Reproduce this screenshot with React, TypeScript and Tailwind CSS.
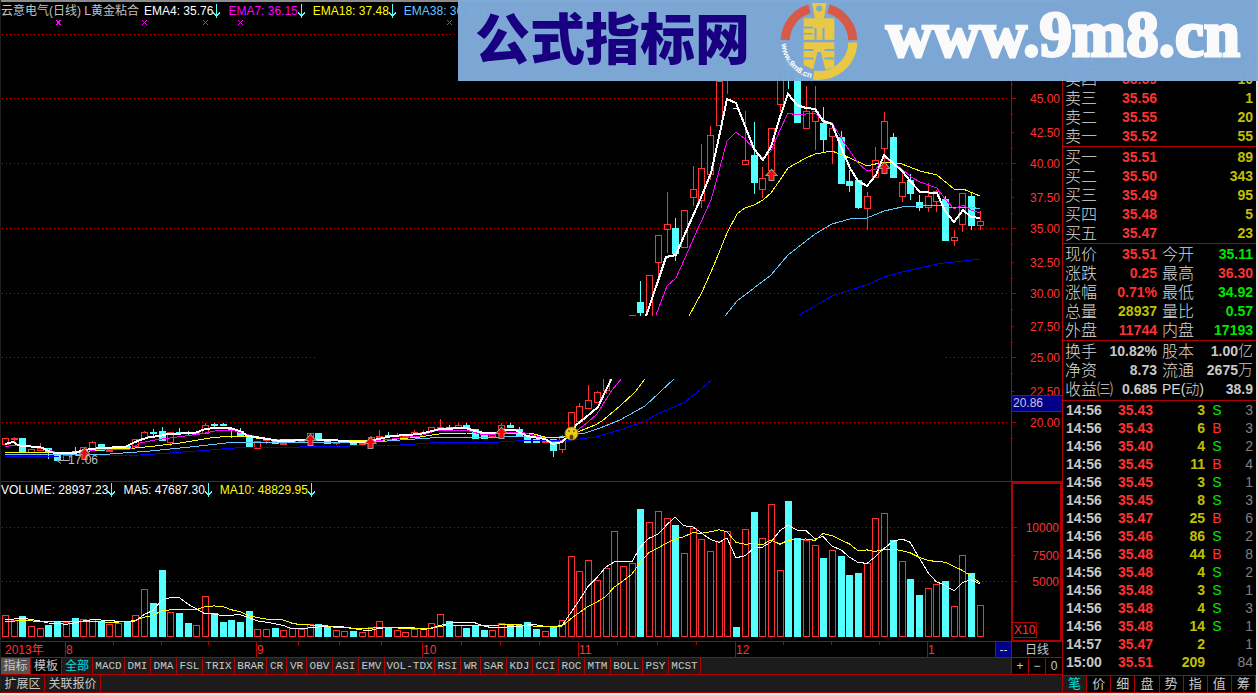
import React from "react";

type Kind = "r" | "c";
/* body top, body bottom, high, low (chart units) */
type Candle = [Kind, number, number, number, number];

const RED = "#ff3232";
const CYAN = "#54ffff";
const LINE = "#b00000";

const SANS = "font-['Liberation_Sans','Noto_Sans_CJK_SC',sans-serif]";

const barX = (i: number) => Math.round(4.9 + 8.7054 * i);

const candles: Candle[] = [
  ["r", 438, 445, 438, 445], ["r", 438, 440, 437, 442], ["c", 438, 452, 438, 452], ["r", 449, 453, 449, 453],
  ["r", 448, 451, 443, 451], ["c", 448, 453, 448, 459], ["c", 453, 461, 453, 461], ["r", 455, 461, 455, 461],
  ["c", 451, 453, 447, 453], ["r", 447, 452, 447, 452], ["r", 442, 449, 441, 449], ["c", 444, 451, 444, 451],
  ["r", 450, 451, 449, 452], ["r", 446, 450, 446, 450], ["c", 446, 449, 446, 449], ["r", 439, 447, 439, 447],
  ["r", 432, 439, 431, 439], ["c", 432, 434, 429, 437], ["c", 431, 441, 427, 441], ["r", 432, 443, 432, 446],
  ["c", 432, 434, 428, 434], ["c", 432, 433, 431, 435], ["r", 432, 434, 432, 434], ["r", 425, 434, 423, 434],
  ["c", 424, 426, 423, 428], ["c", 424, 426, 423, 426], ["c", 429, 431, 428, 438], ["c", 431, 436, 428, 436],
  ["c", 437, 447, 437, 447], ["r", 441, 449, 441, 449], ["r", 439, 441, 439, 444], ["c", 441, 444, 441, 444],
  ["r", 443, 445, 443, 445], ["r", 441, 443, 441, 443], ["r", 440, 442, 439, 442], ["r", 433, 441, 433, 441],
  ["c", 433, 439, 433, 439], ["c", 439, 444, 439, 444], ["r", 442, 444, 442, 445], ["r", 441, 442, 441, 443],
  ["c", 441, 446, 441, 446], ["r", 443, 445, 443, 445], ["r", 437, 442, 436, 442], ["r", 436, 438, 430, 438],
  ["c", 435, 437, 432, 437], ["r", 435, 437, 433, 437], ["r", 435, 437, 434, 437], ["r", 432, 435, 430, 435],
  ["r", 432, 434, 430, 434], ["r", 427, 432, 427, 432], ["r", 427, 429, 419, 429], ["c", 427, 429, 425, 431],
  ["r", 425, 428, 423, 428], ["c", 425, 429, 423, 429], ["c", 429, 439, 429, 439], ["c", 434, 439, 434, 439],
  ["r", 434, 437, 434, 437], ["r", 425, 435, 423, 435], ["c", 425, 428, 423, 428], ["c", 429, 436, 427, 436],
  ["c", 436, 443, 436, 443], ["c", 439, 443, 439, 443], ["r", 441, 443, 441, 443], ["c", 439, 451, 439, 457],
  ["r", 436, 450, 435, 453], ["r", 412, 435, 412, 435], ["r", 406, 422, 403, 424], ["r", 400, 409, 385, 409],
  ["r", 392, 403, 391, 403], ["r", 370, 391, 370, 394], ["r", 350, 370, 340, 370], ["r", 330, 350, 325, 350],
  ["r", 315, 335, 315, 335], ["c", 302, 313, 281, 316], ["r", 275, 330, 275, 330], ["r", 235, 263, 235, 276],
  ["r", 224, 230, 192, 253], ["c", 228, 254, 218, 261], ["r", 210, 248, 210, 248], ["r", 189, 198, 166, 206],
  ["r", 168, 201, 144, 208], ["r", 135, 175, 126, 180], ["r", 81, 126, 70, 126], ["r", 60, 75, 50, 94],
  ["c", 50, 60, 50, 62], ["r", 160, 165, 111, 165], ["c", 155, 183, 122, 194], ["r", 178, 190, 167, 198],
  ["r", 128, 171, 128, 171], ["r", 70, 105, 60, 112], ["c", 60, 70, 60, 89], ["c", 70, 123, 70, 123],
  ["r", 111, 129, 86, 129], ["r", 111, 122, 86, 150], ["c", 123, 140, 107, 153], ["r", 128, 137, 123, 164],
  ["c", 137, 184, 131, 184], ["c", 181, 186, 170, 192], ["c", 180, 208, 180, 209], ["r", 196, 209, 192, 230],
  ["r", 160, 178, 147, 178], ["r", 121, 149, 112, 168], ["c", 137, 178, 133, 178], ["r", 182, 197, 173, 202],
  ["c", 180, 194, 174, 200], ["c", 202, 208, 195, 211], ["r", 196, 208, 183, 212], ["r", 191, 202, 190, 212],
  ["c", 199, 241, 196, 241], ["r", 237, 241, 230, 246], ["r", 193, 225, 193, 232], ["c", 196, 226, 192, 230],
  ["r", 221, 226, 211, 230],
];

/* top edge of each volume column */
const volumes: number[] = [
  615, 620, 616, 626, 628, 625, 621, 622, 618, 619, 619, 622, 624, 623, 622, 615, 589, 603, 570, 612, 613, 623, 625,
  596, 613, 622, 620, 622, 611, 629, 629, 628, 630, 628, 629, 624, 624, 626, 630, 631, 631, 632, 627, 621, 627, 630,
  632, 629, 629, 623, 614, 621, 625, 628, 626, 630, 630, 623, 625, 625, 622, 629, 631, 626, 620, 556, 571, 560, 580,
  568, 531, 566, 563, 509, 522, 511, 518, 525, 553, 528, 539, 551, 541, 531, 627, 529, 512, 538, 504, 570, 501, 538,
  540, 545, 558, 550, 556, 575, 573, 563, 518, 513, 540, 561, 579, 595, 588, 584, 581, 606, 555, 573, 605,
];

const average = (span: number, seed: number) =>
  volumes
    .map((_, i) => {
      let sum = 0;
      for (let k = i - span + 1; k <= i; k++) sum += k < 0 ? seed : volumes[k];
      return `${barX(i)},${(sum / span).toFixed(1)}`;
    })
    .join(" ");

const series: { color: string; width: number; lines: string[] }[] = [
  {
    color: "#0000ff",
    width: 1,
    lines: [
      "5,457 60,456 100,456 140,455 170,453 210,450 235,448 262,447 300,447 330,446 350,446 400,445 445,442 500,442 530,440 571,440 595,437 620,430 645,421 660,413 685,402 712,380",
      "799,315 815,306 832,296 850,290 867,285 884,277 902,272 920,268 937,264 954,262 980,259",
    ],
  },
  {
    color: "#66c4ff",
    width: 1,
    lines: [
      "5,455 30,454 110,454 150,451 190,447 235,442 262,442 375,442 400,440 445,437 466,438 500,437 530,436 555,438 571,435 585,433 600,428 620,420 645,406 660,392 674,379",
      "725,316 737,301 754,288 771,275 788,255 806,241 815,234 832,224 850,219 867,218 884,211 902,207 937,205 954,208 971,207 980,209",
    ],
  },
  {
    color: "#ffff00",
    width: 1,
    lines: [
      "5,453 22,452 75,452 90,451 110,449 135,448 155,446 180,443 210,438 230,436 250,437 262,439 300,440 385,440 420,437 445,433 466,433 500,434 530,433 545,437 560,438 571,435 580,431 595,425 602,421 620,406 635,392 645,379",
      "689,316 702,292 714,265 727,233 737,214 745,208 754,205 763,200 771,193 780,180 788,168 806,158 815,154 832,151 850,158 867,166 884,162 902,164 920,171 937,175 954,189 963,189 980,196",
    ],
  },
  {
    color: "#ff00ff",
    width: 1,
    lines: [
      "5,447 13,445 40,447 55,452 75,453 84,452 100,449 130,449 140,443 155,440 170,438 200,434 215,431 232,430 245,434 262,438 280,440 340,440 354,443 375,441 400,438 420,436 435,431 445,430 466,430 480,434 495,434 510,432 525,433 540,437 550,441 560,441 570,436 580,428 587,423 597,414 605,401 612,390 622,378",
      "656,315 667,286 676,278 685,258 695,235 711,200 719,171 727,141 736,132 745,139 754,149 763,158 771,151 780,130 788,113 797,115 815,113 823,120 832,123 845,144 858,163 867,171 876,169 884,157 893,163 902,169 911,177 920,182 937,188 945,199 954,209 963,205 971,210 980,213",
    ],
  },
  {
    color: "#ffffff",
    width: 2,
    lines: [
      "5,444 13,442 18,445 22,446 40,447 49,451 54,453 75,453 84,450 100,448 125,447 133,443 140,440 150,437 160,436 168,434 195,433 205,429 215,428 230,428 240,431 248,436 262,438 280,441 310,440 330,440 345,441 353,442 364,442 374,440 392,436 420,434 432,431 440,429 466,428 475,431 484,433 495,433 506,430 515,430 527,436 545,439 553,444 562,442 571,434 576,425 585,418 598,407 605,392 612,378",
      "646,316 657,284 666,257 676,255 684,236 700,200 711,173 719,137 727,99 736,103 745,126 754,149 763,160 771,147 780,117 788,94 797,105 806,108 815,109 823,121 832,124 841,147 850,168 858,181 867,186 876,175 884,155 893,163 902,171 911,182 920,192 937,193 945,211 954,222 963,210 971,217 980,218",
    ],
  },
];

const priceGrid = [34, 98, 163, 228, 293, 357, 422];
const volumeGrid = [527, 581];

const priceLabels: [string, number][] = [
  ["47.50", 68], ["45.00", 98], ["42.50", 132], ["40.00", 163], ["37.50", 197], ["35.00", 228], ["32.50", 262],
  ["30.00", 293], ["27.50", 326], ["25.00", 357], ["22.50", 391], ["20.00", 422],
];

function DownArrow() {
  return (
    <svg viewBox="0 0 7 14" className="h-[14px] w-[7px] shrink-0" shapeRendering="crispEdges" aria-hidden="true">
      <path d="M3 0h1v14h-1zM0 8h1v2h-1zM1 9h1v2h-1zM2 10h3v2h-3zM5 9h1v2h-1zM6 8h1v2h-1z" fill={CYAN} />
    </svg>
  );
}

function Indicator({ text, color }: { text: string; color: string }) {
  return (
    <span className={`flex items-center whitespace-nowrap ${color}`}>
      {text}
      <DownArrow />
    </span>
  );
}

const dots = Array.from({ length: 252 }, (_, i) => `M${2 + i * 4} 0h1v1h-1z`).join("");

function GridLine({ y }: { y: number }) {
  return <path d={dots} transform={`translate(0 ${y})`} fill="#c80000" />;
}

function BuyArrow({ x, y }: { x: number; y: number }) {
  return (
    <path
      transform={`translate(${x} ${y})`}
      d="M0.5 -5L5 0H2.5V5H-1.5V0H-4Z"
      fill="#ff0000"
      stroke="#a09898"
      strokeWidth="2"
      paintOrder="stroke"
    />
  );
}

function Cross({ x, y, bold }: { x: number; y: number; bold?: boolean }) {
  return (
    <path
      transform={`translate(${x} ${y})`}
      d={
        bold
          ? "M-2 -2h2v1h-2zM1 -2h2v1h-2zM-1 -1h3v1h-3zM-1 0h3v1h-3zM-1 1h3v1h-3zM-2 2h2v1h-2zM1 2h2v1h-2z"
          : "M-2 -2h1v1h-1zM2 -2h1v1h-1zM-1 -1h1v1h-1zM1 -1h1v1h-1zM0 0h1v1h-1zM-1 1h1v1h-1zM1 1h1v1h-1zM-2 2h1v1h-1zM2 2h1v1h-1z"
      }
      fill="#ff00ff"
    />
  );
}

function PriceChart() {
  return (
    <svg
      viewBox="1 19 1010 462"
      preserveAspectRatio="none"
      className="block h-[462px] w-full"
      shapeRendering="crispEdges"
      role="img"
      aria-label="日线"
    >
      {priceGrid.map((y) => (
        <GridLine key={y} y={y} />
      ))}
      <Cross x={58} y={22} bold />
      <Cross x={144} y={22} />
      <Cross x={205} y={22} />
      <Cross x={240} y={22} />
      <Cross x={449} y={22} />
      {candles.map(([kind, top, bottom, high, low], i) => {
        const x = barX(i);
        return kind === "c" ? (
          <g key={i} fill={CYAN}>
            <rect x={x} y={high} width="1" height={low - high} />
            <rect x={x - 3} y={top} width="7" height={bottom - top} />
          </g>
        ) : (
          <g key={i} fill={RED}>
            <rect x={x} y={high} width="1" height={top - high} />
            <rect x={x} y={bottom} width="1" height={low - bottom} />
            <rect x={x - 2.5} y={top + 0.5} width="6" height={Math.max(bottom - top - 1, 1)} fill="none" stroke={RED} />
          </g>
        );
      })}
      <rect x="733" y="108" width="6" height="1" fill="#ffffff" />
      {series.map((s) =>
        s.lines.map((points) => (
          <polyline key={points} points={points} fill="none" stroke={s.color} strokeWidth={s.width} />
        )),
      )}
      <rect x="318" y="316" width="627" height="63" fill="#000000" />
      <g shapeRendering="auto">
        <BuyArrow x={84} y={454} />
        <BuyArrow x={310} y={440} />
        <BuyArrow x={370} y={443} />
        <BuyArrow x={501} y={433} />
        <BuyArrow x={771} y={175} />
        <BuyArrow x={884} y={168} />
        <circle cx="571.5" cy="433.5" r="6.5" fill="#eccb16" stroke="#9a8210" />
        <circle cx="569" cy="431" r="1" fill="#7a6400" />
        <circle cx="574" cy="431" r="1" fill="#7a6400" />
        <ellipse cx="571.5" cy="437" rx="2" ry="2.5" fill="#5c3c00" />
        <path d="M57 460.5h12M61 458l-4 2.500l4 3" stroke="#b0b0b0" fill="none" />
        <text x="68" y="464" className="font-['Liberation_Sans',sans-serif] text-[12px]" fill="#c0c0c0">
          17.06
        </text>
      </g>
    </svg>
  );
}

function PriceAxis() {
  return (
    <svg viewBox="1011 2 51 479" className="block h-[479px] w-[51px] shrink-0" shapeRendering="crispEdges">
      <rect x="1011" y="2" width="1" height="479" fill={LINE} />
      {priceLabels.map(([label, y], i) => (
        <g key={label}>
          <rect x="1011" y={y} width={i % 2 ? 5 : 3} height="1" fill={LINE} />
          <rect x="1011" y={y + 16} width="2" height="1" fill={LINE} />
          <text
            x="1060"
            y={y + 5}
            textAnchor="end"
            className="font-['Liberation_Sans',sans-serif] text-[12px]"
            fill={RED}
          >
            {label}
          </text>
        </g>
      ))}
      <rect x="1012" y="396" width="50" height="15" fill="#000088" />
      <rect x="1012" y="395" width="50" height="1" fill={LINE} />
      <rect x="1012" y="411" width="50" height="1" fill={LINE} />
      <text x="1013" y="407" className="font-['Liberation_Sans',sans-serif] text-[12px]" fill="#c8c8d8">
        20.86
      </text>
    </svg>
  );
}

function VolumeChart() {
  return (
    <svg
      viewBox="1 498 1010 143"
      preserveAspectRatio="none"
      className="block h-[143px] w-full"
      shapeRendering="crispEdges"
      role="img"
      aria-label="VOLUME"
    >
      {volumeGrid.map((y) => (
        <GridLine key={y} y={y} />
      ))}
      {volumes.map((top, i) => {
        const x = barX(i);
        return candles[i][0] === "c" ? (
          <rect key={i} x={x - 3} y={top} width="7" height={637 - top} fill={CYAN} />
        ) : (
          <rect key={i} x={x - 2.5} y={top + 0.5} width="6" height={636 - top} fill="none" stroke={RED} />
        );
      })}
      <polyline points={average(5, 620)} fill="none" stroke="#ffffff" />
      <polyline points={average(10, 622)} fill="none" stroke="#ffff00" />
    </svg>
  );
}

function VolumeAxis() {
  return (
    <svg viewBox="1011 482 51 159" className="block h-[159px] w-[51px] shrink-0" shapeRendering="crispEdges">
      <rect x="1012" y="483" width="49" height="158" fill="none" stroke={LINE} strokeWidth="2" />
      {(
        [
          ["10000", 527, 5],
          ["7500", 555, 3],
          ["5000", 581, 5],
        ] as [string, number, number][]
      ).map(([label, y, w]) => (
        <g key={label}>
          <rect x="1012" y={y} width={w} height="1" fill={LINE} />
          <text
            x="1059"
            y={y + 5}
            textAnchor="end"
            className="font-['Liberation_Sans',sans-serif] text-[12px]"
            fill={RED}
          >
            {label}
          </text>
        </g>
      ))}
      <rect x="1012.5" y="622.5" width="24" height="15" fill="none" stroke={LINE} />
      <text x="1014" y="634" className="font-['Liberation_Sans',sans-serif] text-[12px]" fill={RED}>
        X10
      </text>
    </svg>
  );
}

const months: [string, number][] = [
  ["8", 65], ["9", 256], ["10", 422], ["11", 578], ["12", 735], ["1", 927],
];

function TimeAxis() {
  return (
    <svg viewBox="1 642 994 15" className="block h-[15px] min-w-0 flex-1" preserveAspectRatio="none" shapeRendering="crispEdges">
      <g fill={LINE}>
        {months.map(([label, x]) => (
          <rect key={label} x={x} y="642" width="1" height="15" />
        ))}
        {[113, 161, 208, 298, 339, 381, 461, 500, 539, 617, 657, 696, 783, 831, 879].map((x) => (
          <rect key={x} x={x} y="642" width="1" height="3" />
        ))}
      </g>
      <g fill={RED} className="font-['Liberation_Sans','Noto_Sans_CJK_SC',sans-serif] text-[12px]">
        <text x="5" y="654">2013年</text>
        {months.map(([label, x]) => (
          <text key={label} x={x + 1} y="654">
            {label}
          </text>
        ))}
      </g>
    </svg>
  );
}

const indicatorTabs = [
  "MACD", "DMI", "DMA", "FSL", "TRIX", "BRAR", "CR", "VR", "OBV", "ASI", "EMV", "VOL-TDX", "RSI", "WR", "SAR", "KDJ",
  "CCI", "ROC", "MTM", "BOLL", "PSY", "MCST",
];
const tabWidths: Record<number, string> = { 2: "w-[20px]", 3: "w-[26px]", 4: "w-[32px]", 7: "w-[50px]" };

const CELL = "flex items-center justify-center whitespace-nowrap border-r border-[#b00000]";

function Toolbar() {
  return (
    <nav className="flex h-[17px] border-b border-[#b00000] bg-[#1c1c1c] text-[#c8c8c8]">
      <button className={`${CELL} w-[30px] bg-[#555555] text-[12px]`}>指标</button>
      <button className={`${CELL} w-[31px] bg-black text-[12px]`}>模板</button>
      <button className={`${CELL} w-[31px] text-[12px] text-[#00e0e0]`}>全部</button>
      {indicatorTabs.map((name) => (
        <button
          key={name}
          className={`${CELL} ${tabWidths[name.length]} font-['Liberation_Mono',monospace] text-[11px]`}
        >
          {name}
        </button>
      ))}
      <div className="ml-auto flex w-[51px] border-l border-[#b00000] bg-black text-[12px]">
        <button className={`${CELL} flex-1`}>+</button>
        <button className={`${CELL} flex-1`}>−</button>
        <button className="flex flex-1 items-center justify-center">0</button>
      </div>
    </nav>
  );
}

type Quote = [string, string, string];
const asks: Quote[] = [
  ["卖五", "35.60", "1"], ["卖四", "35.59", "10"], ["卖三", "35.56", "1"], ["卖二", "35.55", "20"], ["卖一", "35.52", "55"],
];
const bids: Quote[] = [
  ["买一", "35.51", "89"], ["买二", "35.50", "343"], ["买三", "35.49", "95"], ["买四", "35.48", "5"], ["买五", "35.47", "23"],
];

const R = "text-[#ff3232]";
const G = "text-[#00e600]";
const Y = "text-[#c0c000]";
const W = "text-[#c8c8c8]";

type Stat = [string, string, string, string, string, string];
const stats: Stat[] = [
  ["现价", "35.51", R, "今开", "35.11", G],
  ["涨跌", "0.25", R, "最高", "36.30", R],
  ["涨幅", "0.71%", R, "最低", "34.92", G],
  ["总量", "28937", Y, "量比", "0.57", G],
  ["外盘", "11744", R, "内盘", "17193", G],
];
const company: Stat[] = [
  ["换手", "10.82%", W, "股本", "1.00亿", W],
  ["净资", "8.73", W, "流通", "2675万", W],
  ["收益㈢", "0.685", W, "PE(动)", "38.9", W],
];

const trades: [string, string, string, string, string][] = [
  ["14:56", "35.43", "3", "S", "3"], ["14:56", "35.43", "6", "B", "3"], ["14:56", "35.40", "4", "S", "2"],
  ["14:56", "35.45", "11", "B", "4"], ["14:56", "35.45", "3", "S", "1"], ["14:56", "35.45", "8", "S", "3"],
  ["14:56", "35.47", "25", "B", "6"], ["14:56", "35.46", "86", "S", "2"], ["14:56", "35.48", "44", "B", "8"],
  ["14:56", "35.48", "4", "S", "2"], ["14:56", "35.48", "3", "S", "1"], ["14:56", "35.48", "4", "S", "3"],
  ["14:56", "35.48", "14", "S", "1"], ["14:57", "35.47", "2", "", "1"], ["15:00", "35.51", "209", "", "84"],
];

function QuoteTable({ rows }: { rows: Quote[] }) {
  return (
    <table className="w-full table-fixed">
      <tbody>
        {rows.map(([name, price, amount]) => (
          <tr key={name} className="h-[19px] leading-[19px]">
            <th className="w-[38px] p-0 pl-0.5 text-left text-[16px] font-light text-[#d8d8d8]">{name}</th>
            <td className={`w-[56px] p-0 text-right text-[14px] font-bold ${R}`}>{price}</td>
            <td className={`p-0 pr-[3px] text-right text-[14px] font-bold ${Y}`}>{amount}</td>
          </tr>
        ))}
      </tbody>
    </table>
  );
}

function StatTable({ rows }: { rows: Stat[] }) {
  return (
    <table className="w-full table-fixed whitespace-nowrap">
      <tbody>
        {rows.map(([a, av, ac, b, bv, bc]) => (
          <tr key={a} className="h-[19px] leading-[19px]">
            <th className="w-[38px] p-0 pl-0.5 text-left text-[16px] font-light text-[#d8d8d8]">{a}</th>
            <td className={`w-[56px] p-0 text-right text-[14px] font-bold ${ac}`}>{av}</td>
            <th
              className={`w-[40px] p-0 pl-[5px] text-left font-light text-[#d8d8d8] ${
                b.startsWith("PE") ? "text-[14px]" : "text-[16px]"
              }`}
            >
              {b}
            </th>
            <td className={`p-0 pr-[3px] text-right text-[14px] font-bold ${bc}`}>
              {bv.replace(/[亿万]/, "")}
              {/[亿万]/.test(bv) && <span className="text-[15px] leading-none font-light">{bv.slice(-1)}</span>}
            </td>
          </tr>
        ))}
      </tbody>
    </table>
  );
}

function Sidebar() {
  return (
    <aside className="flex w-[196px] shrink-0 flex-col border-l border-r-2 border-l-[#b00000] border-r-[#e4e4e4] pt-[51px]">
      <QuoteTable rows={asks} />
      <section className="border-t border-[#b00000] pt-px">
        <QuoteTable rows={bids} />
      </section>
      <section className="border-t border-[#b00000] pt-px">
        <StatTable rows={stats} />
      </section>
      <section className="border-t border-[#b00000] pt-px pb-px">
        <StatTable rows={company} />
      </section>
      <section className="border-t border-[#b00000]">
        <table className="w-full table-fixed text-[14px] font-bold">
          <tbody>
            {trades.map(([time, price, volume, side, count], i) => (
              <tr key={i} className="h-[18px] leading-[18px]">
                <td className="w-[40px] p-0 pl-[3px] text-[#c8c8c8]">{time}</td>
                <td className={`w-[50px] p-0 text-right ${R}`}>{price}</td>
                <td className={`w-[52px] p-0 text-right ${Y}`}>{volume}</td>
                <td className={`w-[24px] p-0 text-center font-normal ${side === "B" ? R : G}`}>{side}</td>
                <td className="p-0 pr-[3px] text-right font-normal text-[#808080]">{count}</td>
              </tr>
            ))}
          </tbody>
        </table>
      </section>
      <nav className="mt-auto flex h-[18px] border-y border-[#b00000] text-[13px] text-[#c8c8c8]">
        {["笔", "价", "细", "盘", "势", "指", "值", "筹"].map((tab, i) => (
          <button
            key={tab}
            className={`${CELL} flex-1 ${i === 0 ? "bg-[#1c1c1c] text-[#00e0e0]" : ""}`}
          >
            {tab}
          </button>
        ))}
      </nav>
    </aside>
  );
}

function CoinLogo() {
  return (
    <svg viewBox="0 0 78 80" className="h-[80px] w-[78px]" aria-hidden="true">
      <g fill="none" strokeWidth="9">
        <path d="M5.2 39A33.8 33.8 0 0 1 29.5 7.8" stroke="#d75a48" />
        <path d="M48.5 7.8A33.8 33.8 0 0 1 72.8 39" stroke="#d75a48" />
        <path d="M72.8 41.5A33.8 33.8 0 0 1 33.7 74" stroke="#e9c944" />
      </g>
      <path d="M32 2h14.5l-2.5 15.500h-9z" fill="#e9c944" />
      <path d="M23.7 17.3h30.6v21.5H23.7z" fill="#e9c944" />
      <path d="M23.7 41.2h30.6V66l-9 2.500L41 51h-3.500L33 68.500L23.700 64z" fill="#e9c944" />
      <g fill="#7da8d6">
        <circle cx="39.200" cy="7.500" r="3" />
        <path d="M23.700 25.500h9v2h-9zM34.500 27h2v11.800h-2zM42.500 27h2v11.800h-2zM23.700 32h9v1.500h-9zM23.700 48h10v2h-10zM44.500 48h9.800v2h-9.800zM23.700 56.500h10v2h-10zM44.500 56.500h9.800v2h-9.800z" />
      </g>
      <path id="coin-arc" d="M1.500 43A37.500 37.500 0 0 0 34 77.500" fill="none" />
      <text className="font-['Liberation_Sans',sans-serif] text-[8px] font-bold" fill="#ffffff">
        <textPath href="#coin-arc">www.9m8.cn</textPath>
      </text>
    </svg>
  );
}

function Banner() {
  return (
    <header className="absolute top-0 right-0 flex h-[81px] w-[800px] items-center bg-[#7ea9d8]/98 pl-[17px] whitespace-nowrap">
      <span className="pb-[10px] text-[55px] leading-none font-black text-[#190080] font-['Noto_Sans_CJK_SC',sans-serif]">
        公式指标网
      </span>
      <span className="ml-[30px] shrink-0">
        <CoinLogo />
      </span>
      <a
        href="http://www.9m8.cn"
        className="ml-7 pb-[12px] font-['Liberation_Serif',serif] text-[65px] leading-none font-bold text-[#fafafa] [-webkit-text-stroke:3px_#fafafa]"
      >
        www.9m8.cn
      </a>
    </header>
  );
}

export default function App() {
  return (
    <main className={`relative flex min-h-screen flex-col bg-black ${SANS}`}>
      <div className="flex flex-1">
        <div className="flex min-w-0 flex-1 flex-col border-l border-[#202020]">
          <div className="flex border-t-2 border-t-[#8c8c8c]">
            <div className="min-w-0 flex-1">
              <div className="flex h-[17px] items-center gap-2 text-[12px] leading-none">
                <span className="-mr-[3px] whitespace-nowrap text-[#c0c0c0]">云意电气(日线) L黄金粘合</span>
                <Indicator text="EMA4: 35.76" color="text-white" />
                <Indicator text="EMA7: 36.15" color="text-[#ff00ff]" />
                <Indicator text="EMA18: 37.48" color="text-[#ffff00]" />
                <Indicator text="EMA38: 36.46" color="text-[#66c4ff]" />
              </div>
              <PriceChart />
            </div>
            <PriceAxis />
          </div>
          <div className="flex border-t border-t-[#b00000]">
            <div className="min-w-0 flex-1">
              <div className="flex h-[16px] items-center gap-2 text-[12px] leading-none">
                <Indicator text="VOLUME: 28937.23" color="text-white" />
                <Indicator text="MA5: 47687.30" color="text-white" />
                <Indicator text="MA10: 48829.95" color="text-[#ffff00]" />
              </div>
              <VolumeChart />
            </div>
            <VolumeAxis />
          </div>
          <div className="flex h-[17px] border-y border-[#b00000] text-[12px] leading-none">
            <TimeAxis />
            <span className="flex w-[16px] items-center justify-center border-l border-[#b00000] bg-[#000088] text-[#d0d0d0]">
              --
            </span>
            <button className="flex w-[51px] items-center justify-center border-l border-[#b00000] text-[#c8c8c8]">
              日线
            </button>
          </div>
          <Toolbar />
          <nav className="flex h-[18px] border-b border-[#b00000] bg-[#1c1c1c] text-[12px] text-[#c8c8c8]">
            <button className={`${CELL} w-[44px]`}>扩展区</button>
            <button className={`${CELL} w-[56px]`}>关联报价</button>
          </nav>
        </div>
        <Sidebar />
      </div>
      <div className="h-[2px] bg-[#e8e8e8]" />
      <Banner />
    </main>
  );
}
